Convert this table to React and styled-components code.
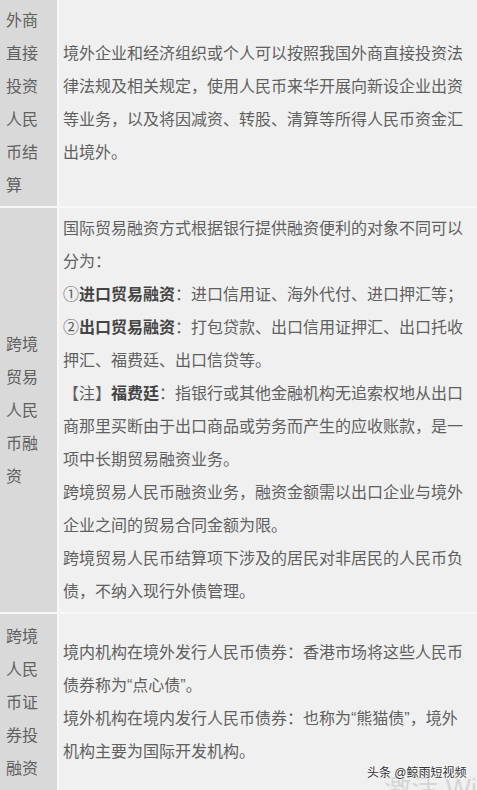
import React from "react";
import styled, { createGlobalStyle } from "styled-components";

const GlobalStyle = createGlobalStyle`
  body {
    margin: 0;
    background: #fff;
  }
`;

const rows = [
  {
    label: "外商直接投资人民币结算",
    paras: [
      [
        "境外企业和经济组织或个人可以按照我国外商直接投资法律法规及相关规定，使用人民币来华开展向新设企业出资等业务，以及将因减资、转股、清算等所得人民币资金汇出境外。",
      ],
    ],
  },
  {
    label: "跨境贸易人民币融资",
    paras: [
      ["国际贸易融资方式根据银行提供融资便利的对象不同可以分为："],
      ["①", { b: "进口贸易融资" }, "：进口信用证、海外代付、进口押汇等；"],
      ["②", { b: "出口贸易融资" }, "：打包贷款、出口信用证押汇、出口托收押汇、福费廷、出口信贷等。"],
      [
        "【注】",
        { b: "福费廷" },
        "：指银行或其他金融机构无追索权地从出口商那里买断由于出口商品或劳务而产生的应收账款，是一项中长期贸易融资业务。",
      ],
      ["跨境贸易人民币融资业务，融资金额需以出口企业与境外企业之间的贸易合同金额为限。"],
      ["跨境贸易人民币结算项下涉及的居民对非居民的人民币负债，不纳入现行外债管理。"],
    ],
  },
  {
    label: "跨境人民币证券投融资",
    paras: [
      ["境内机构在境外发行人民币债券：香港市场将这些人民币债券称为“点心债”。"],
      ["境外机构在境内发行人民币债券：也称为“熊猫债”，境外机构主要为国际开发机构。"],
    ],
  },
];

export default function App() {
  return (
    <Page>
      <GlobalStyle />
      <Table>
        {rows.map((row) => (
          <React.Fragment key={row.label}>
            <LabelCell>{row.label}</LabelCell>
            <ContentCell>
              {row.paras.map((parts, i) => (
                <Para key={i}>
                  {parts.map((p, j) =>
                    typeof p === "string" ? p : <Strong key={j}>{p.b}</Strong>
                  )}
                </Para>
              ))}
            </ContentCell>
          </React.Fragment>
        ))}
      </Table>
      <ActivateMark>激活 Windows</ActivateMark>
      <SourceMark>头条 @鲸雨短视频</SourceMark>
    </Page>
  );
}

const Page = styled.div`
  position: relative;
  height: 790px;
  overflow: hidden;
  font-family: "Liberation Sans", "Noto Sans CJK SC", sans-serif;
  font-size: 16px;
  line-height: 33px;
  color: #606060;
`;

const Table = styled.div`
  display: grid;
  grid-template-columns: 57px 1fr;
  grid-template-rows: auto auto 1fr;
  gap: 2px;
  height: 100%;
  background: #f8f8f8;
`;

const LabelCell = styled.div`
  display: flex;
  align-items: center;
  padding: 4px 6px;
  background: #d9d9d9;
  word-break: break-all;
`;

const ContentCell = styled.div`
  display: flex;
  flex-direction: column;
  justify-content: center;
  padding: 4px;
  background: #f0f0f0;
`;

const Para = styled.p`
  margin: 0;
`;

const Strong = styled.strong`
  font-weight: bold;
  color: #444;
`;

const ActivateMark = styled.div`
  position: absolute;
  left: 384px;
  top: 772px;
  font-size: 27px;
  line-height: 34px;
  color: rgba(160, 160, 160, 0.35);
  white-space: nowrap;
`;

const SourceMark = styled.div`
  position: absolute;
  left: 367px;
  top: 764px;
  font-size: 12px;
  line-height: 18px;
  color: #333;
  white-space: nowrap;
  text-shadow: 0 0 2px #fff, 0 0 2px #fff;
`;
